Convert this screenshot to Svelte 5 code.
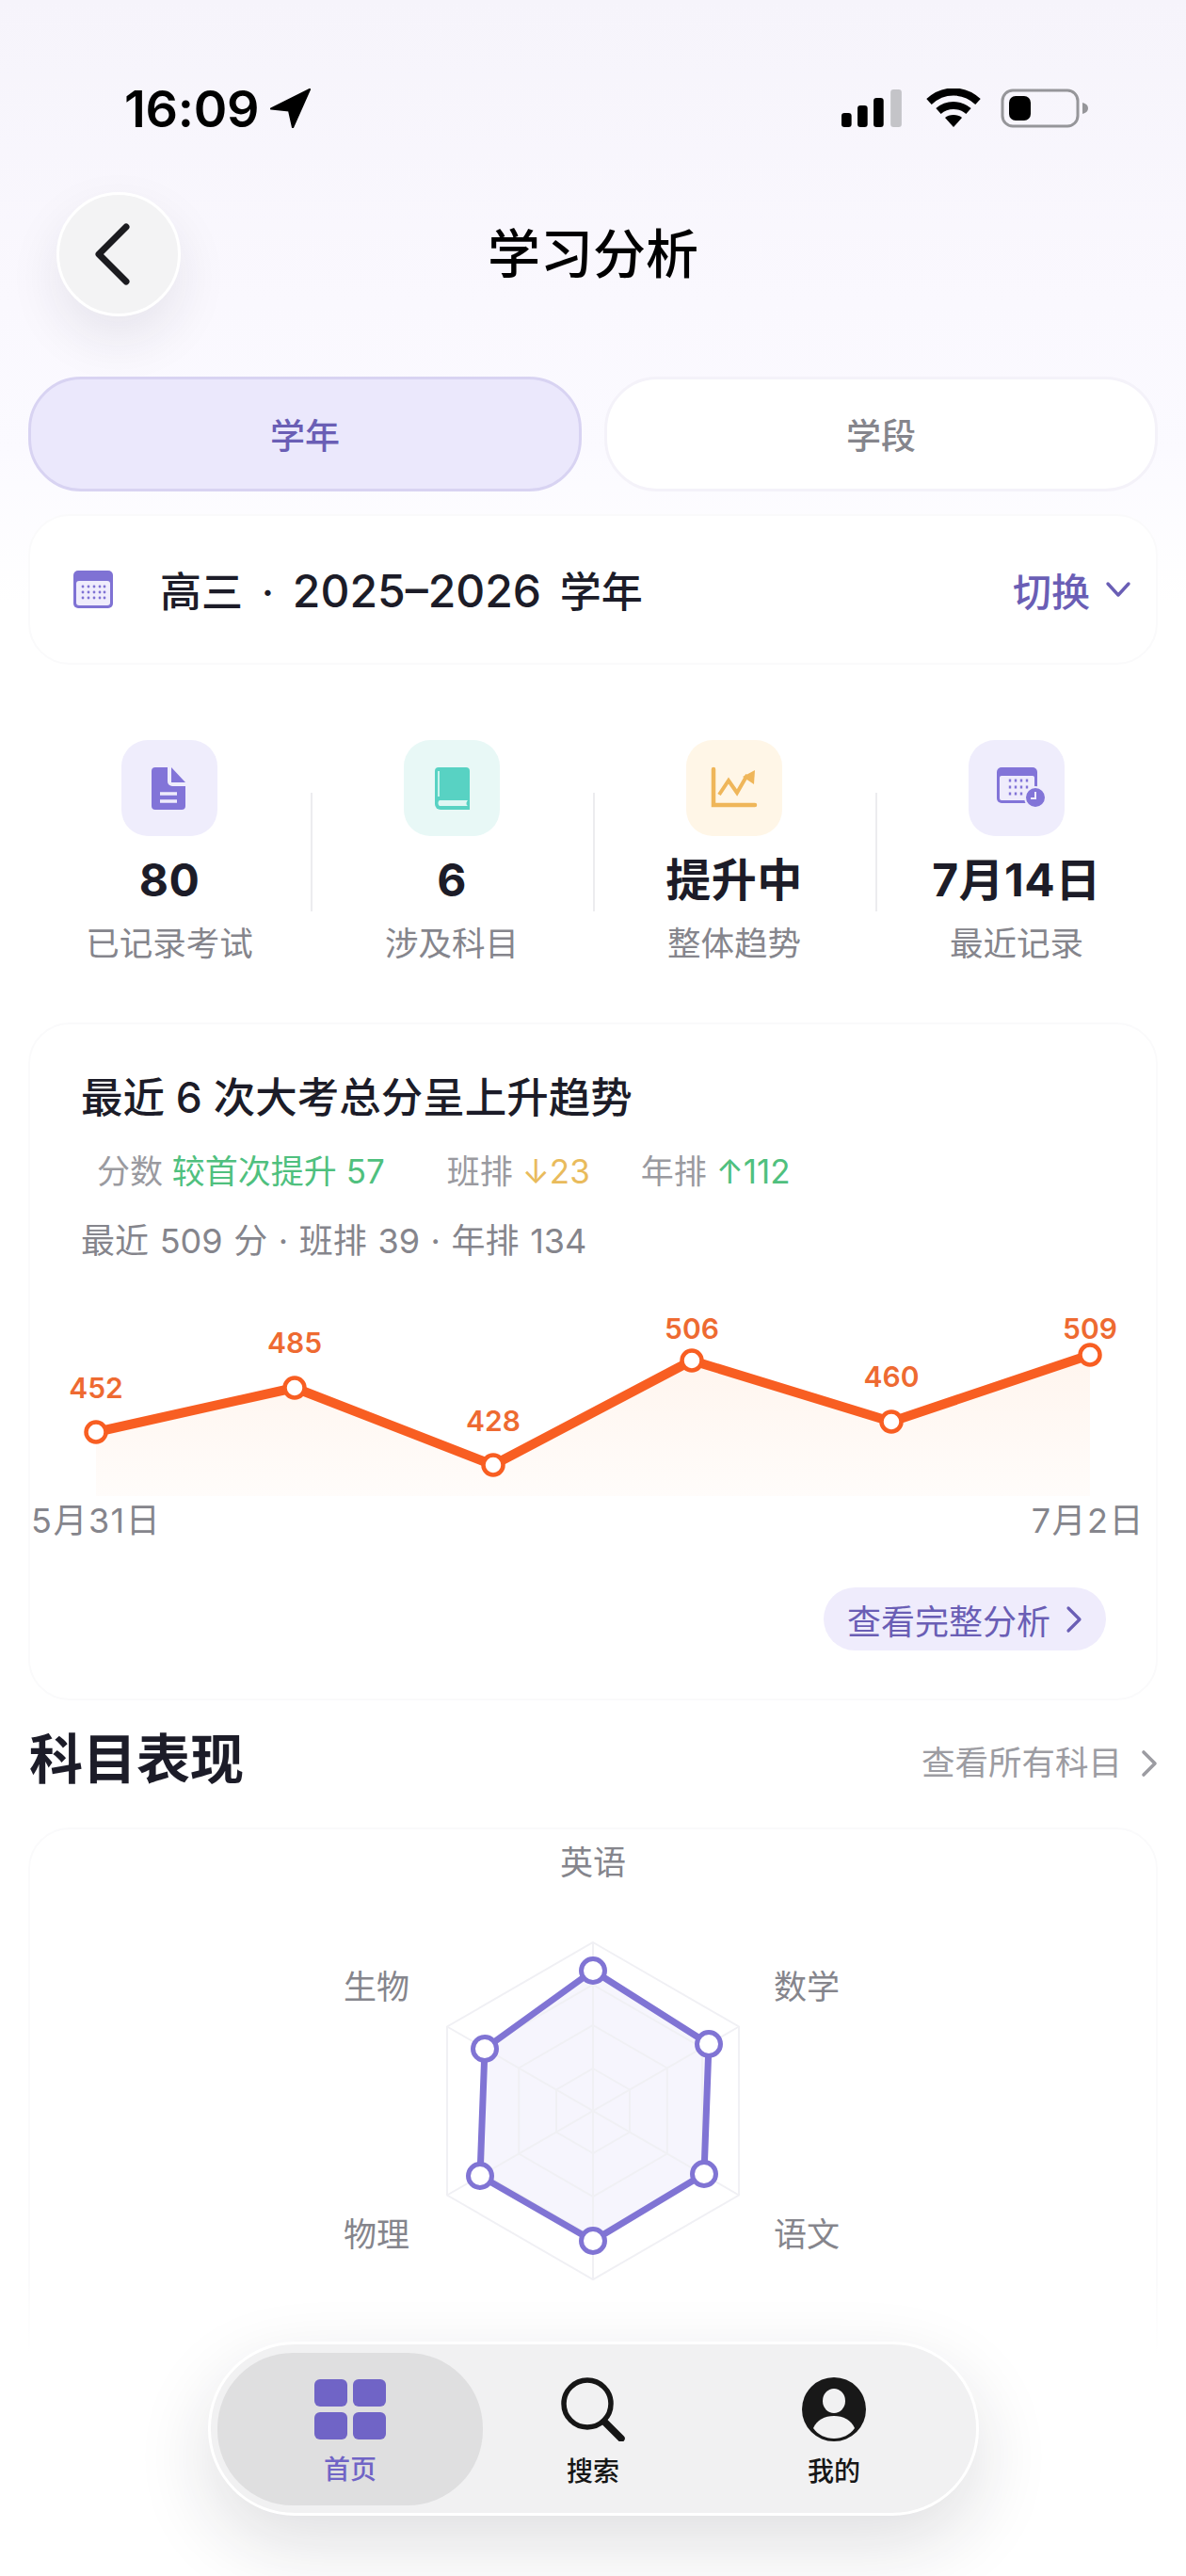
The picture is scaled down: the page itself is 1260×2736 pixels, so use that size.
<script lang="ts">
	const stats = [
		{ value: '80', label: '已记录考试', tone: 'violet', icon: 'doc' },
		{ value: '6', label: '涉及科目', tone: 'teal', icon: 'book' },
		{ value: '提升中', label: '整体趋势', tone: 'amber', icon: 'trend' },
		{ value: '7月14日', label: '最近记录', tone: 'violet', icon: 'cal' }
	];

	// chart coordinates sit in the card's own 1200-wide box
	const points = [
		{ x: 72, y: 141, label: '452', ly: 94 },
		{ x: 283, y: 94, label: '485', ly: 46 },
		{ x: 494, y: 176, label: '428', ly: 129 },
		{ x: 705, y: 65, label: '506', ly: 31 },
		{ x: 917, y: 130, label: '460', ly: 82 },
		{ x: 1128, y: 59, label: '509', ly: 31 }
	];
	const linePts = points.map((p) => `${p.x},${p.y}`).join(' ');
	const areaPts = `72,209 ${linePts} 1128,209`;

	const cx = 600;
	const cy = 299;
	function hex(r: number) {
		return [0, 1, 2, 3, 4, 5]
			.map((i) => {
				const a = (Math.PI / 3) * i - Math.PI / 2;
				return `${(cx + r * Math.cos(a)).toFixed(1)},${(cy + r * Math.sin(a)).toFixed(1)}`;
			})
			.join(' ');
	}
	const spokes = [0, 1, 2].map((i) => {
		const a = (Math.PI / 3) * i - Math.PI / 2;
		return {
			x1: cx + 179 * Math.cos(a),
			y1: cy + 179 * Math.sin(a),
			x2: cx - 179 * Math.cos(a),
			y2: cy - 179 * Math.sin(a)
		};
	});
	const scores = [
		[600, 150],
		[723, 228],
		[718, 366],
		[600, 437],
		[480, 368],
		[485, 233]
	];
	const scorePts = scores.map((p) => p.join(',')).join(' ');
	const axes = [
		{ name: '英语', x: 600, y: 36 },
		{ name: '数学', x: 827, y: 168 },
		{ name: '语文', x: 827, y: 431 },
		{ name: '物理', x: 370, y: 431 },
		{ name: '生物', x: 370, y: 168 }
	];
</script>

<div class="phone">
	<div class="status">
		<div class="clock">
			<span>16:09</span>
			<svg width="44" height="42" viewBox="0 0 44 42"><path d="M42 1 1 21.5 20 23.5 24 41.5z" fill="#000" stroke="#000" stroke-width="2" stroke-linejoin="round" /></svg>
		</div>
		<div class="sys">
			<svg width="66" height="42" viewBox="0 0 62 42" preserveAspectRatio="none">
				<rect x="0" y="26" width="10" height="15" rx="3" fill="#000" />
				<rect x="16" y="18" width="10" height="23" rx="3" fill="#000" />
				<rect x="32" y="10" width="10" height="31" rx="3" fill="#000" />
				<rect x="49" y="1" width="11" height="40" rx="3" fill="#c4c4c8" />
			</svg>
			<svg width="60" height="42" viewBox="0 0 58 42" fill="none" stroke="#000" stroke-width="8">
				<path d="M3 14C18 0 40 0 55 14" />
				<path d="M13 24c9-8 23-8 32 0" />
				<path d="M29 41l-9-10c4-4 14-4 18 0z" fill="#000" stroke="none" />
			</svg>
			<svg class="batt" width="94" height="42" viewBox="0 0 94 42">
				<rect x="2" y="2" width="80" height="38" rx="11" fill="none" stroke="#96969a" stroke-width="3" />
				<rect x="9" y="8" width="23" height="26" rx="7" fill="#000" />
				<path d="M87 15c4 1 6 3 6 6s-2 5-6 6z" fill="#96969a" />
			</svg>
		</div>
	</div>

	<header class="head">
		<button type="button" class="back" aria-label="返回">
			<svg width="46" height="66" viewBox="0 0 46 66" fill="none" stroke="#1b1b1f" stroke-width="7" stroke-linecap="round" stroke-linejoin="round"><path d="M37 4 8 33l29 29" /></svg>
		</button>
		<h1>学习分析</h1>
	</header>

	<main class="content">
		<div class="tabs">
			<button type="button" class="tab on">学年</button>
			<button type="button" class="tab">学段</button>
		</div>

		<section class="card year">
			<svg class="year-ico" width="42" height="40" viewBox="0 0 42 40">
				<rect width="42" height="40" rx="5" fill="#7f72d4" />
				<rect x="3" y="11" width="36" height="26" rx="3" fill="#efecfc" />
				<g fill="#7f72d4">
					{#each [15, 21, 27] as y}
						{#each [10, 16, 22, 28, 33] as x}
							<circle cx={x} cy={y + 2} r="1.4" />
						{/each}
					{/each}
				</g>
			</svg>
			<span class="year-name">高三 · <span class="num">2025–2026</span> 学年</span>
			<span class="switch">切换
				<svg width="28" height="18" viewBox="0 0 28 18" fill="none" stroke="#6a5eb5" stroke-width="3.4" stroke-linecap="round" stroke-linejoin="round"><path d="m3 3 11 12L25 3" /></svg>
			</span>
		</section>

		<section class="stats">
			{#each stats as s, i}
				<div class="stat" class:sep={i > 0}>
					<div class="stat-ico {s.tone}">
						<svg width="102" height="102" viewBox="0 0 102 102">
							{#if s.icon === 'doc'}
								<path d="M36 29h13v15a5 5 0 0 0 5 5h14v21a4 4 0 0 1-4 4H36a4 4 0 0 1-4-4V33a4 4 0 0 1 4-4z" fill="#8274d8" />
								<path d="M53 29l15 16H53z" fill="#8274d8" />
								<path d="M41 57h18M41 65h18" stroke="#efecfc" stroke-width="3.4" />
							{:else if s.icon === 'book'}
								<path d="M37 29h29a4 4 0 0 1 4 4v41H39a6 6 0 0 1-6-6V33a4 4 0 0 1 4-4z" fill="#58d2c3" />
								<path d="M37 33v27" stroke="#c8f3ec" stroke-width="2" />
								<path d="M38 64h30c-2 2-2 5 0 6H38c-2-1-2-5 0-6z" fill="#dff7f3" />
							{:else if s.icon === 'trend'}
								<path d="M29 31v38h44" fill="none" stroke="#efb65a" stroke-width="4.5" stroke-linecap="round" />
								<path d="M35 58l10-15 9 13 11-19" fill="none" stroke="#efb65a" stroke-width="4" />
								<path d="M60 39l13-7-1 15z" fill="#efb65a" />
							{:else}
								<rect x="30" y="29" width="43" height="38" rx="5" fill="#8274d8" />
								<rect x="33" y="38" width="37" height="26" rx="2" fill="#efecfc" />
								<g fill="#8274d8">
									{#each [43, 50, 57] as y}
										{#each [44, 50, 56, 62] as x}
											<rect x={x - 1.2} y={y - 1.5} width="2.4" height="3" />
										{/each}
									{/each}
								</g>
								<circle cx="71" cy="61" r="11" fill="#8274d8" stroke="#efecfc" stroke-width="2" />
								<path d="M71 55v7h-5" fill="none" stroke="#efecfc" stroke-width="2" />
							{/if}
						</svg>
					</div>
					<strong class="stat-val">{s.value}</strong>
					<span class="stat-lab">{s.label}</span>
				</div>
			{/each}
		</section>

		<section class="card trend">
			<h2>最近 6 次大考总分呈上升趋势</h2>
			<p class="deltas">
				<span><i>分数</i> <b class="up">较首次提升 57</b></span>
				<span><i>班排</i> <b class="down">↓23</b></span>
				<span class="rank-year"><i>年排</i> <b class="up">↑112</b></span>
			</p>
			<p class="latest">最近 509 分 · 班排 39 · 年排 134</p>
			<svg class="line-chart" width="1198" height="212" viewBox="0 0 1198 212">
				<defs>
					<linearGradient id="area" x1="0" y1="0" x2="0" y2="1">
						<stop offset="0" stop-color="#fff5ee" />
						<stop offset="1" stop-color="#fffcfa" />
					</linearGradient>
				</defs>
				<polygon points={areaPts} fill="url(#area)" />
				<polyline points={linePts} fill="none" stroke="#f85e22" stroke-width="10" stroke-linejoin="round" />
				{#each points as p}
					<circle cx={p.x} cy={p.y} r="10.5" fill="#fff" stroke="#f85e22" stroke-width="4.5" />
					<text x={p.x} y={p.ly + 11} text-anchor="middle" class="pt-label">{p.label}</text>
				{/each}
			</svg>
			<div class="dates"><span>5月31日</span><span>7月2日</span></div>
			<button type="button" class="more">查看完整分析
				<svg width="18" height="30" viewBox="0 0 18 30" fill="none" stroke="#6a5eb5" stroke-width="3.2" stroke-linecap="round" stroke-linejoin="round"><path d="m3 3 12 12L3 27" /></svg>
			</button>
		</section>

		<div class="section-head">
			<h2>科目表现</h2>
			<span class="all">查看所有科目
				<svg width="18" height="30" viewBox="0 0 18 30" fill="none" stroke="#9c9ca2" stroke-width="3.6" stroke-linecap="round" stroke-linejoin="round"><path d="m3 3 12 12L3 27" /></svg>
			</span>
		</div>

		<section class="card radar">
			<svg width="1198" height="520" viewBox="0 0 1198 520">
				<polygon points={scorePts} fill="#f6f5fd" />
				{#each [179, 134, 91, 45] as r}
					<polygon points={hex(r)} fill="none" stroke="#f0f0f4" stroke-width="2" />
				{/each}
				{#each spokes as s}
					<line x1={s.x1} y1={s.y1} x2={s.x2} y2={s.y2} stroke="#f0f0f4" stroke-width="2" />
				{/each}
				<polygon points={scorePts} fill="none" stroke="#8074d4" stroke-width="7" stroke-linejoin="round" />
				{#each scores as p}
					<circle cx={p[0]} cy={p[1]} r="12.5" fill="#fff" stroke="#8074d4" stroke-width="5" />
				{/each}
				{#each axes as a}
					<text x={a.x} y={a.y + 12} text-anchor="middle" class="axis">{a.name}</text>
				{/each}
			</svg>
		</section>
	</main>

	<div class="fade"></div>

	<nav class="dock">
		<a href="#home" class="dock-item active">
			<svg width="76" height="64" viewBox="0 0 76 64" fill="#7064c6">
				<rect width="35" height="29" rx="6" />
				<rect x="41" width="35" height="29" rx="6" />
				<rect y="35" width="35" height="29" rx="6" />
				<rect x="41" y="35" width="35" height="29" rx="6" />
			</svg>
			<span>首页</span>
		</a>
		<a href="#search" class="dock-item">
			<svg width="68" height="68" viewBox="0 0 68 68" fill="none" stroke="#161616" stroke-linecap="round">
				<circle cx="28" cy="28" r="25" stroke-width="5.5" />
				<path d="m46 47 18 18" stroke-width="7.5" />
			</svg>
			<span>搜索</span>
		</a>
		<a href="#me" class="dock-item">
			<svg width="68" height="68" viewBox="0 0 68 68">
				<circle cx="34" cy="34" r="34" fill="#181818" />
				<ellipse cx="34" cy="25" rx="12" ry="13" fill="#f1f1f2" />
				<path d="M12 54c4-9 12-13 22-13s18 4 22 13c-5 7-13 11-22 11s-17-4-22-11z" fill="#f1f1f2" />
			</svg>
			<span>我的</span>
		</a>
	</nav>
</div>

<style>
	:global(body) {
		margin: 0;
		background: #fff;
	}
	.phone {
		position: relative;
		width: 1260px;
		height: 2736px;
		overflow: hidden;
		font-family: Inter, 'Noto Sans CJK SC', sans-serif;
		color: #1c1c28;
		background: linear-gradient(180deg, #f6f4fb 0, #faf8fe 320px, #fbfaff 480px, #fff 640px);
	}
	.status {
		height: 204px;
		box-sizing: border-box;
		padding: 26px 103px 0 132px;
		display: flex;
		align-items: center;
		justify-content: space-between;
	}
	.clock {
		display: flex;
		align-items: center;
		gap: 12px;
		font-size: 54px;
		font-weight: 600;
		letter-spacing: -0.3px;
		color: #000;
	}
	.sys {
		display: flex;
		align-items: center;
		gap: 23px;
	}
	.batt {
		margin-left: -3px;
	}
	.head {
		display: grid;
		grid-template-columns: 132px 1fr 132px;
		align-items: center;
		padding: 0 60px;
		height: 132px;
	}
	.back {
		width: 132px;
		height: 132px;
		padding: 0 12px 0 0;
		border-radius: 50%;
		border: 3px solid #fff;
		background: #f3f3f4;
		box-shadow: 0 24px 56px rgba(30, 30, 50, 0.09);
		display: flex;
		align-items: center;
		justify-content: center;
		box-sizing: border-box;
	}
	h1 {
		margin: 0;
		text-align: center;
		font-size: 56px;
		line-height: 80px;
		font-weight: 500;
		color: #000;
	}
	.content {
		padding: 64px 30px 0;
	}
	.tabs {
		display: grid;
		grid-template-columns: 1fr 1fr;
		gap: 24px;
	}
	.tab {
		height: 122px;
		border-radius: 56px;
		border: 3px solid #f4f2f9;
		background: #fff;
		font: inherit;
		font-size: 37px;
		font-weight: 500;
		color: #85858c;
	}
	.tab.on {
		background: #ebe8fc;
		border-color: #d8d3f2;
		color: #6a5eb5;
	}
	.card {
		background: #fff;
		border: 2px solid #fafafb;
		border-radius: 44px;
		box-sizing: border-box;
	}
	.year {
		margin-top: 24px;
		height: 160px;
		display: flex;
		align-items: center;
		padding: 0 26px 0 46px;
	}
	.year-ico {
		margin-right: 50px;
	}
	.year-name {
		font-size: 44px;
		font-weight: 500;
		flex: 1;
		word-spacing: 8px;
	}
	.num {
		font-size: 48px;
	}
	.switch {
		display: flex;
		align-items: center;
		gap: 16px;
		font-size: 41px;
		font-weight: 500;
		color: #6a5eb5;
	}
	.stats {
		margin-top: 80px;
		display: grid;
		grid-template-columns: repeat(4, 300px);
	}
	.stat {
		position: relative;
		display: flex;
		flex-direction: column;
		align-items: center;
	}
	.stat.sep::before {
		content: '';
		position: absolute;
		left: 0;
		top: 56px;
		height: 126px;
		width: 2px;
		background: #ececef;
	}
	.stat-ico {
		width: 102px;
		height: 102px;
		border-radius: 28px;
	}
	.stat-ico svg {
		display: block;
	}
	.violet {
		background: #efedfc;
	}
	.teal {
		background: #e8f8f6;
	}
	.amber {
		background: #fff6e7;
	}
	.stat-val {
		margin-top: 17px;
		font-size: 48px;
		line-height: 60px;
		font-weight: 700;
		letter-spacing: 0.5px;
	}
	.stat-lab {
		margin-top: 16px;
		font-size: 35.5px;
		line-height: 44px;
		color: #85858c;
	}
	.trend {
		margin-top: 61px;
		height: 720px;
		padding-top: 50px;
		display: flex;
		flex-direction: column;
	}
	.trend h2 {
		margin: 0 0 0 54px;
		font-size: 44.5px;
		line-height: 56px;
		font-weight: 500;
	}
	.deltas {
		margin: 26px 0 0 71px;
		display: flex;
		gap: 66px;
		font-size: 35px;
		line-height: 48px;
	}
	.deltas i {
		font-style: normal;
		color: #9a9aa0;
	}
	.deltas b {
		font-weight: 400;
	}
	.rank-year {
		margin-left: -12px;
	}
	.up {
		color: #4fc07e;
	}
	.down {
		color: #e9bb5c;
	}
	.latest {
		margin: 26px 0 0 54px;
		font-size: 36px;
		line-height: 48px;
		word-spacing: 1.5px;
		color: #85858c;
	}
	.line-chart {
		display: block;
		margin: 38px 0 0 -2px;
	}
	.pt-label {
		font-size: 30px;
		font-weight: 600;
		fill: #ee6a31;
	}
	.dates {
		margin-top: 1px;
		padding: 0 12px 0 1px;
		display: flex;
		justify-content: space-between;
		font-size: 36px;
		line-height: 44px;
		letter-spacing: 1.5px;
		color: #85858c;
	}
	.more {
		margin: 49px 53px 0 auto;
		height: 67px;
		width: 300px;
		border: 0;
		border-radius: 34px;
		background: #efecfc;
		font: inherit;
		font-size: 36px;
		color: #6a5eb5;
		display: flex;
		align-items: center;
		justify-content: center;
		gap: 16px;
		padding: 0;
	}
	.section-head {
		margin-top: 25px;
		display: flex;
		justify-content: space-between;
		align-items: flex-end;
		padding-left: 1px;
	}
	.section-head h2 {
		margin: 0;
		font-size: 57px;
		line-height: 76px;
		font-weight: 700;
	}
	.all {
		display: flex;
		align-items: center;
		gap: 20px;
		font-size: 35.5px;
		line-height: 48px;
		padding-bottom: 10px;
		color: #9c9ca2;
	}
	.radar {
		margin-top: 34px;
		height: 700px;
	}
	.radar svg {
		display: block;
		margin-left: -2px;
	}
	.axis {
		font-size: 35px;
		fill: #85858c;
	}
	.fade {
		position: absolute;
		left: 0;
		right: 0;
		top: 2420px;
		bottom: 0;
		background: linear-gradient(180deg, rgba(255, 255, 255, 0), #fff 80px);
	}
	.dock {
		position: absolute;
		left: 221px;
		top: 2487px;
		width: 819px;
		height: 185px;
		box-sizing: border-box;
		padding: 9px 12px 8px 7px;
		border: 3px solid #fff;
		border-radius: 92px;
		background: #f1f1f2;
		box-shadow: 0 30px 80px rgba(30, 30, 40, 0.14);
		display: grid;
		grid-template-columns: 282px 234px 1fr;
	}
	.dock-item {
		display: flex;
		flex-direction: column;
		align-items: center;
		justify-content: flex-start;
		padding-top: 26px;
		gap: 12px;
		text-decoration: none;
		font-size: 28px;
		line-height: 40px;
		font-weight: 500;
		color: #161616;
		border-radius: 80px;
	}
	.dock-item svg {
		display: block;
	}
	.dock-item.active {
		background: #dfdfe0;
		color: #7064c6;
		padding-top: 28px;
	}
</style>
